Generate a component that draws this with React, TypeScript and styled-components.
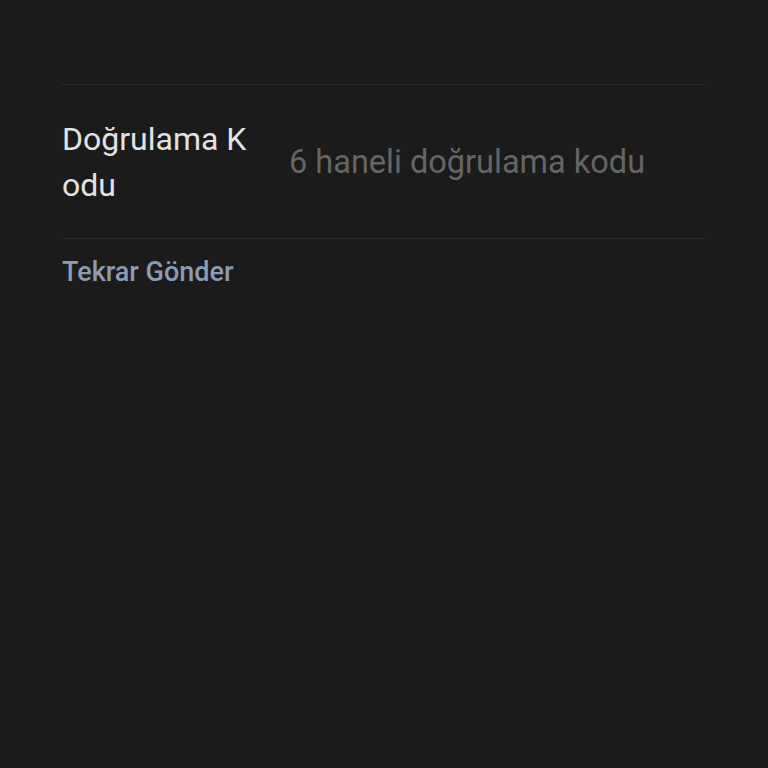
import React, { useState } from 'react';
import styled, { createGlobalStyle } from 'styled-components';

const GlobalStyle = createGlobalStyle`
  html, body {
    margin: 0;
    padding: 0;
    background: #1b1b1b;
    font-family: Roboto, 'Noto Sans', sans-serif;
  }
`;

const App = () => {
  const [code, setCode] = useState('');

  return (
    <Page>
      <GlobalStyle />
      <Form>
        <Divider />
        <Row>
          <Label htmlFor='code'>Doğrulama Kodu</Label>
          <Input
            id='code'
            value={code}
            onChange={(e) => setCode(e.target.value)}
            placeholder='6 haneli doğrulama kodu'
          />
        </Row>
        <Divider />
        <ResendButton type='button'>Tekrar Gönder</ResendButton>
      </Form>
    </Page>
  );
};

export default App;

const Page = styled.div`
  width: 768px;
  height: 768px;
  background: #1b1b1b;
  box-sizing: border-box;
  padding: 84px 63px 0 62px;
`;

const Form = styled.div`
  display: flex;
  flex-direction: column;
`;

const Divider = styled.div`
  height: 1px;
  background: #2c2c2c;
`;

const Row = styled.div`
  display: flex;
  align-items: center;
  height: 153px;
`;

const Label = styled.label`
  width: 196px;
  flex-shrink: 0;
  font-size: 32px;
  line-height: 46px;
  color: #e2e2e2;
  word-break: break-all;
`;

const Input = styled.input`
  flex: 1;
  min-width: 0;
  margin-left: 31px;
  background: transparent;
  border: none;
  outline: none;
  font-family: Roboto, 'Noto Sans', sans-serif;
  font-size: 32.5px;
  color: #e2e2e2;
  padding: 0;
  &::placeholder {
    color: #656565;
  }
`;

const ResendButton = styled.button`
  align-self: flex-start;
  background: none;
  border: none;
  padding: 0;
  margin-top: 17px;
  font-family: Roboto, 'Noto Sans', sans-serif;
  font-size: 27px;
  font-weight: 500;
  color: #8a9cb2;
  cursor: pointer;
`;
